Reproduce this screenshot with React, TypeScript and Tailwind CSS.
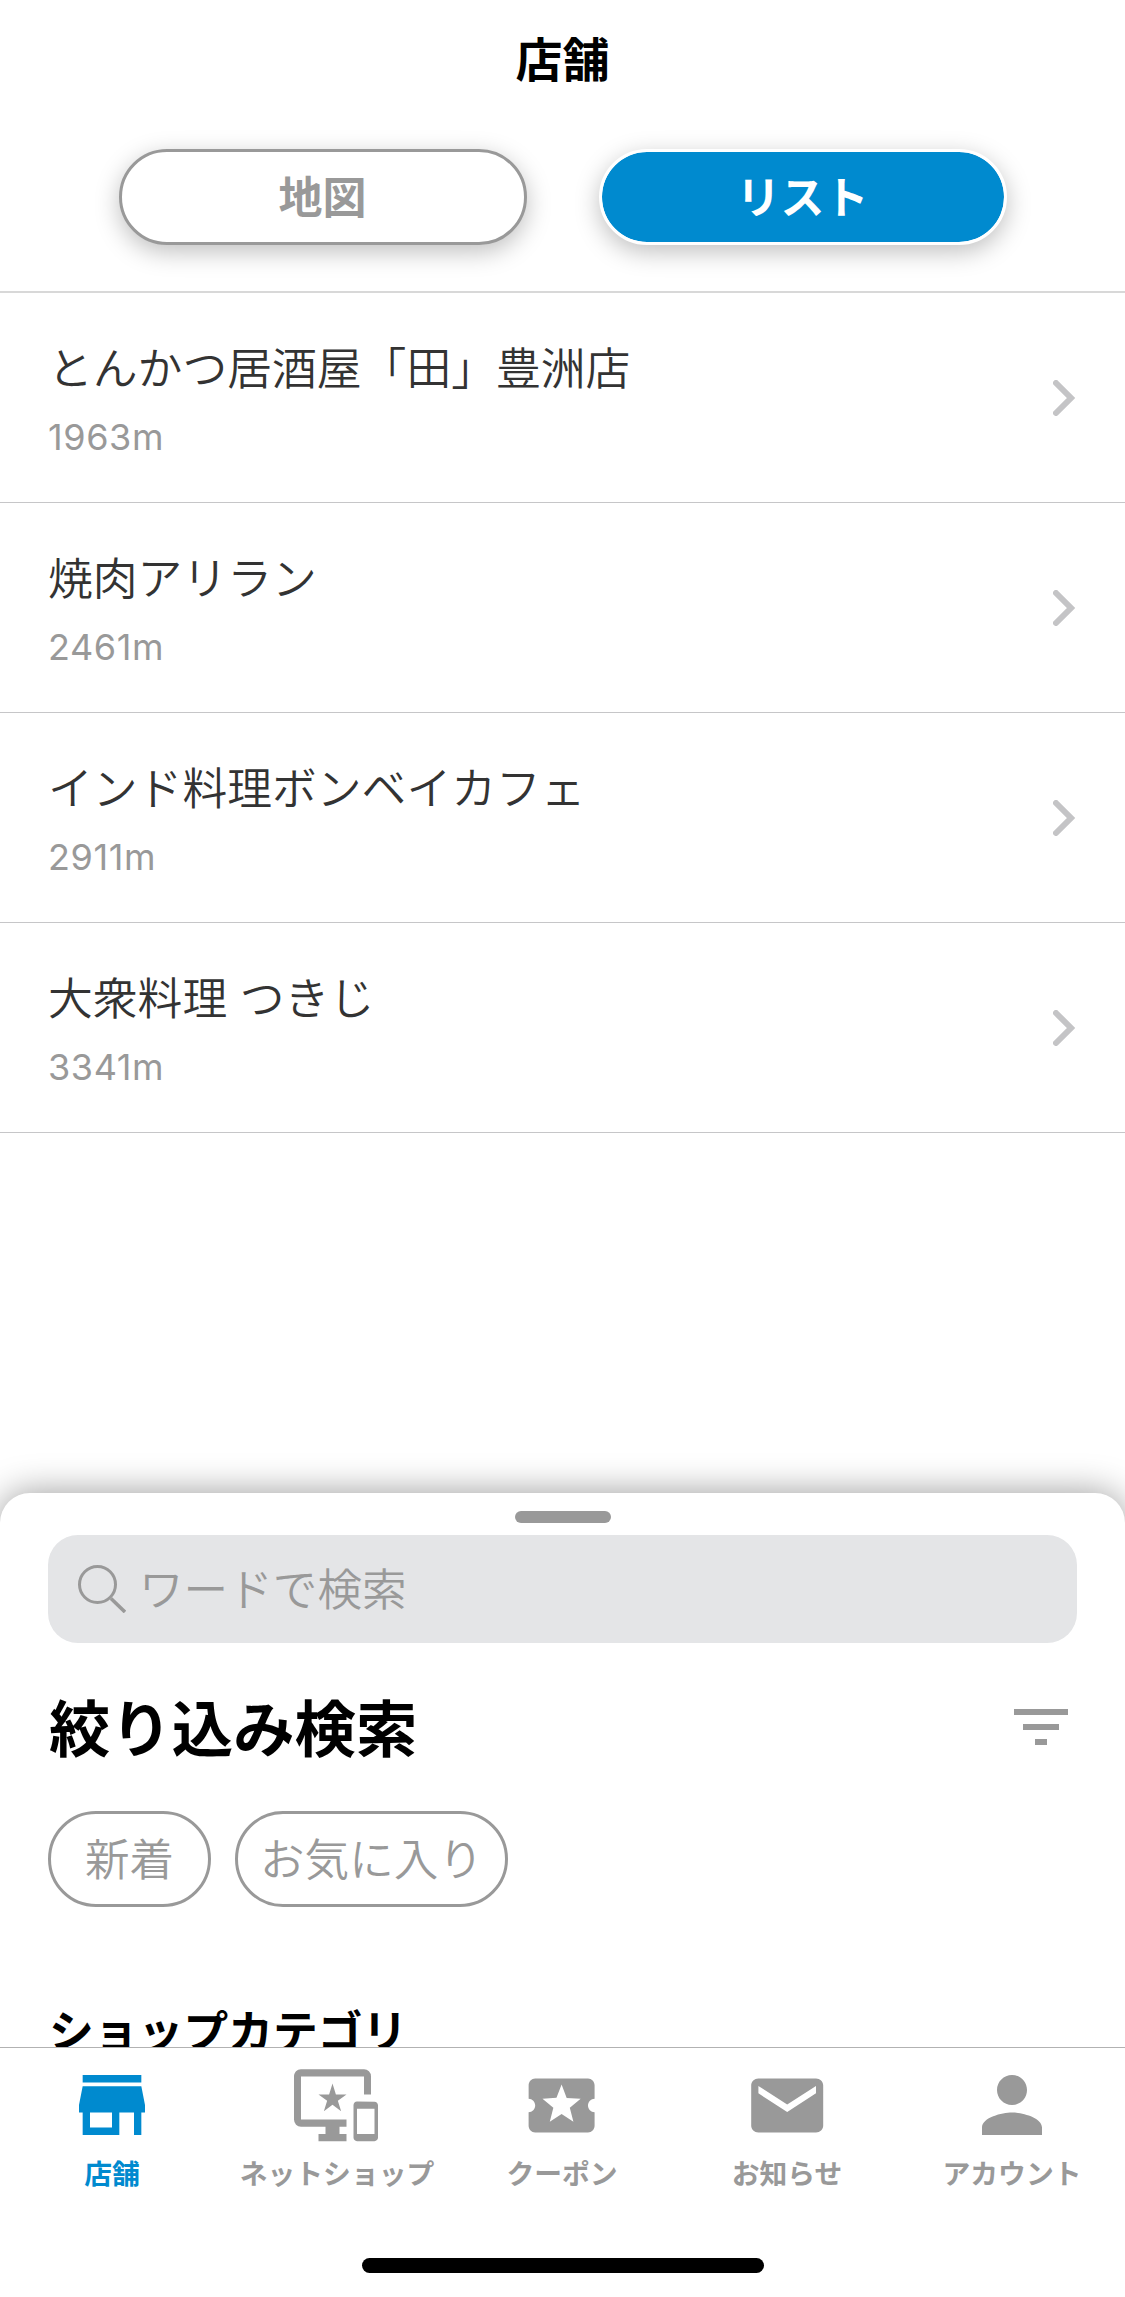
import type { ReactNode } from "react";
import {
  MdImportantDevices,
  MdLocalPlay,
  MdPerson,
  MdStore,
} from "react-icons/md";

const shops = [
  { name: "とんかつ居酒屋「田」豊洲店", distance: "1963m" },
  { name: "焼肉アリラン", distance: "2461m" },
  { name: "インド料理ボンベイカフェ", distance: "2911m" },
  { name: "大衆料理 つきじ", distance: "3341m" },
];

function MailIcon() {
  return (
    <svg
      viewBox="0 0 24 24"
      preserveAspectRatio="none"
      fill="currentColor"
      className="mr-[1px] h-[81px] w-[86.4px]"
    >
      <path
        fillRule="evenodd"
        d="M20 4H4c-1.1 0-2 .9-2 2v12c0 1.1.9 2 2 2h16c1.1 0 2-.9 2-2V6c0-1.1-.9-2-2-2zm0 4.4-8 5.5-8-5.5V6.2l8 5.5 8-5.5z"
      />
    </svg>
  );
}

const tabs: { label: string; icon: ReactNode; active?: boolean }[] = [
  {
    label: "店舗",
    icon: (
      <MdStore
        preserveAspectRatio="none"
        className="mr-[1px] h-[90px] w-[88px]"
      />
    ),
    active: true,
  },
  {
    label: "ネットショップ",
    icon: (
      <MdImportantDevices
        preserveAspectRatio="none"
        className="mr-[3px] h-[86.4px] w-[84px]"
      />
    ),
  },
  {
    label: "クーポン",
    icon: (
      <MdLocalPlay
        preserveAspectRatio="none"
        className="mr-[1px] h-[81px] w-[79.2px]"
      />
    ),
  },
  { label: "お知らせ", icon: <MailIcon /> },
  { label: "アカウント", icon: <MdPerson className="mr-[1px] size-[90px]" /> },
];

function ShopRow({ name, distance }: { name: string; distance: string }) {
  return (
    <li className="flex h-[210px] items-center justify-between border-b border-[#c6c6c8] px-[48px]">
      <div className="pt-[3px]">
        <p className="text-[44.8px] leading-[68px] font-[350] text-[#333333]">
          {name}
        </p>
        <p className="mt-[7px] text-[36px] leading-[54px] tracking-[0.6px] text-[#999999]">
          {distance}
        </p>
      </div>
      <svg
        viewBox="0 0 24 36"
        fill="none"
        stroke="#c4c4c6"
        strokeWidth="6"
        strokeLinecap="round"
        className="h-[36px] w-[24px]"
      >
        <path d="M3 3l15 15L3 33" />
      </svg>
    </li>
  );
}

export default function App() {
  return (
    <div className="flex h-[2297px] w-[1125px] flex-col overflow-hidden bg-white font-[Inter,'Noto_Sans_CJK_JP',sans-serif]">
      {/* Header */}
      <header className="flex h-[293px] shrink-0 flex-col border-b-2 border-[#d8d8d8]">
        <h1 className="mt-[25px] text-center text-[47px] leading-[70px] font-semibold text-black">
          店舗
        </h1>
        <div className="mt-[54px] flex justify-center gap-[72px]">
          <button className="h-[96px] w-[408px] rounded-full border-3 border-[#999999] bg-white pt-[2px] text-[44px] leading-[66px] font-semibold text-[#999999] shadow-[0_7px_24px_rgba(0,0,0,0.25)]">
            地図
          </button>
          <button className="h-[96px] w-[408px] rounded-full border-3 border-white bg-[#008acf] bg-clip-padding pt-[2px] text-[44px] leading-[66px] font-semibold text-white shadow-[0_7px_24px_rgba(0,0,0,0.25)]">
            リスト
          </button>
        </div>
      </header>

      {/* Shop list */}
      <ul className="flex-1">
        {shops.map((shop) => (
          <ShopRow key={shop.name} name={shop.name} distance={shop.distance} />
        ))}
      </ul>

      {/* Search sheet */}
      <section className="h-[554px] shrink-0 overflow-hidden rounded-t-[30px] bg-white px-[48px] pt-[18px] shadow-[0_0_36px_rgba(0,0,0,0.4)]">
        <div className="mx-auto h-[12px] w-[96px] rounded-full bg-[#999999]" />
        <div className="mt-[12px] flex h-[108px] items-center rounded-[30px] bg-[#e4e5e7] pl-[30px] text-[#999999]">
          <svg
            viewBox="0 0 48 48"
            fill="none"
            stroke="currentColor"
            strokeWidth="3"
            className="size-[48px]"
          >
            <circle cx="19.5" cy="19.5" r="18" />
            <path d="M33 33.5l14 13.5" strokeWidth="3.6" />
          </svg>
          <span className="mt-[1px] ml-[13px] text-[44.6px] leading-[66px] font-[350]">
            ワードで検索
          </span>
        </div>

        <div className="mt-[40px] flex h-[90px] items-center justify-between">
          <h2 className="mt-[4px] ml-[1px] text-[61.4px] leading-[90px] font-semibold text-black">
            絞り込み検索
          </h2>
          <div className="mr-[9px] mb-[2px] flex flex-col items-center gap-[9px]">
            <span className="h-[6px] w-[54px] bg-[#999999]" />
            <span className="h-[6px] w-[36px] bg-[#999999]" />
            <span className="h-[6px] w-[12px] bg-[#999999]" />
          </div>
        </div>

        <div className="mt-[38px] flex gap-[24px] text-[44.6px] leading-[66px] font-[350] text-[#999999]">
          <button className="h-[96px] w-[163px] rounded-full border-3 border-[#999999] pt-[1px]">
            新着
          </button>
          <button className="h-[96px] w-[273px] rounded-full border-3 border-[#999999] pt-[1px]">
            お気に入り
          </button>
        </div>

        <h3 className="mt-[92px] ml-[1px] text-[44.8px] leading-[66px] font-semibold text-black">
          ショップカテゴリ
        </h3>
      </section>

      {/* Tab bar */}
      <nav className="relative flex h-[250px] shrink-0 flex-col border-t border-[#b2b2b2] bg-white">
        <div className="grid grid-cols-5">
          {tabs.map((tab) => (
            <div
              key={tab.label}
              className={`flex flex-col items-center pt-[12px] ${
                tab.active ? "text-[#008acf]" : "text-[#999999]"
              }`}
            >
              <div className="flex h-[90px] items-center">{tab.icon}</div>
              <span className="mt-[3px] mr-[1px] text-[27.8px] leading-[42px] font-semibold">
                {tab.label}
              </span>
            </div>
          ))}
        </div>
        <div className="mx-auto mt-auto mb-[24px] h-[15px] w-[402px] rounded-full bg-black" />
      </nav>
    </div>
  );
}
